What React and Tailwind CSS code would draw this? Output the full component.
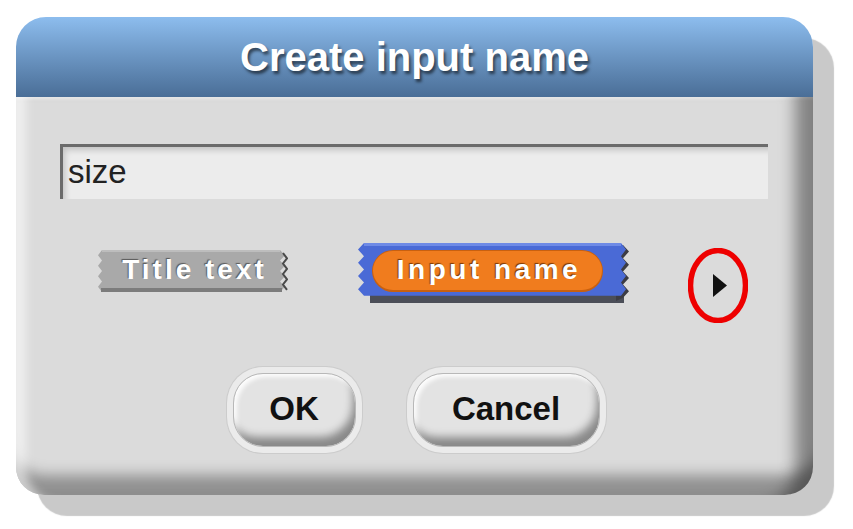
import React from 'react';

function zig(x0, x1, y0, y1, step) {
  // zigzag points from y0 to y1 alternating between x0 and x1
  const pts = [];
  let i = 0;
  for (let y = y0; y <= y1 + 0.01; y += step) {
    pts.push(`${i % 2 === 0 ? x0 : x1},${y.toFixed(1)}`);
    i++;
  }
  return pts;
}

function TitleBlock() {
  const right = zig(182, 187, 0, 42, 5.25);
  const left = zig(4, 0, 0, 42, 5.25).reverse();
  const shape = ['4,0', ...right, ...left].join(' ');
  return (
    <div className="relative w-[190px] h-[42px] flex items-center justify-center">
      <svg className="absolute inset-0" width="190" height="42" viewBox="0 0 190 42">
        <polygon points={shape} fill="#a9a9a9" />
        <rect x="3" y="38" width="181" height="4" fill="#7c7c7c" />
        <rect x="4" y="0" width="178" height="2" fill="#bdbdbd" />
        <polyline points={zig(185, 189, 3, 40, 5.25).join(' ')} fill="none" stroke="#4a4a4a" strokeWidth="2" />
      </svg>
      <span className="relative text-white font-bold text-[28px] tracking-[3px] leading-none pl-[3px] pb-[2px] [font-family:'Liberation_Sans',Arial,sans-serif] [text-shadow:-1px_-1px_1px_rgba(80,80,80,0.9)]">
        Title text
      </span>
    </div>
  );
}

function InputBlock() {
  const right = zig(263, 268, 0, 53, 6.6);
  const left = zig(6, 0, 0, 53, 6.6).reverse();
  const shape = ['6,0', ...right, ...left].join(' ');
  return (
    <div className="relative w-[272px] h-[60px] flex items-start">
      <svg className="absolute inset-0" width="272" height="60" viewBox="0 0 272 60">
        <rect x="12" y="50" width="254" height="10" fill="#4b4e58" />
        <polygon points={zig(265, 271, 2, 58, 6.6).join(' ') + ' 258,58 258,2'} fill="#3c3c44" />
        <polygon points={shape} fill="#4a6ad6" />
        <rect x="6" y="0" width="257" height="3" fill="#6e8ae6" />
        <rect x="14" y="7" width="231" height="42" rx="21" fill="#c9600f" />
        <rect x="15" y="8" width="229" height="39" rx="20" fill="#f07c1e" />
      </svg>
      <div className="relative ml-[14px] mt-[7px] w-[231px] h-[42px] flex items-center justify-center">
        <span className="text-white font-bold text-[28px] tracking-[3.5px] leading-none pl-[3px] pb-[2px] [font-family:'Liberation_Sans',Arial,sans-serif] [text-shadow:-1px_-1px_1px_rgba(110,50,0,0.9)]">
          Input name
        </span>
      </div>
    </div>
  );
}

function Button({ label, width }) {
  return (
    <div
      className="h-[74px] rounded-[30px] bg-[#e3e3e3] border border-[#b8b8b8] flex items-center justify-center shadow-[0_0_0_6px_rgba(255,255,255,0.6),0_0_0_7px_rgba(190,190,190,0.5),inset_-6px_-13px_8px_-4px_rgba(0,0,0,0.4),inset_3px_3px_4px_rgba(255,255,255,0.9)]"
      style={{ width }}
    >
      <span className="text-[#111] font-bold text-[33px] leading-none pb-[4px] [font-family:'Liberation_Sans',Arial,sans-serif]">
        {label}
      </span>
    </div>
  );
}

export default function App() {
  return (
    <div className="w-[853px] h-[529px] bg-white overflow-hidden pt-[17px] pl-[16px]">
      <div className="w-[797px] h-[478px] rounded-[30px] shadow-[21px_21px_1px_#c9c9c9] flex flex-col">
        <div className="h-[80px] rounded-t-[30px] bg-gradient-to-b from-[#8dbdee] to-[#4a6e97] flex items-center justify-center">
          <span className="text-white font-bold text-[40px] leading-none [font-family:'Liberation_Sans',Arial,sans-serif] [text-shadow:2px_3px_3px_rgba(0,0,0,0.55)]">
            Create input name
          </span>
        </div>
        <div className="flex-1 rounded-b-[28px] bg-[#dbdbdb] flex flex-col shadow-[inset_18px_0_10px_-8px_rgba(255,255,255,0.55),inset_-30px_0_16px_-12px_rgba(0,0,0,0.4),inset_0_-30px_14px_-10px_rgba(0,0,0,0.34),inset_0_4px_3px_-2px_rgba(255,255,255,0.5)]">
          <div className="mt-[47px] ml-[44px] w-[708px] h-[55px] bg-[#ececec] border-t-[3px] border-l-[3px] border-[#6b6b6b] shadow-[inset_4px_5px_6px_-2px_rgba(0,0,0,0.18)] flex items-center pl-[5px]">
            <span className="text-[#222] text-[33px] leading-none pb-[3px] [font-family:'Liberation_Sans',Arial,sans-serif]">size</span>
          </div>
          <div className="mt-[44px] flex items-start">
            <div className="ml-[82px] mt-[7px]">
              <TitleBlock />
            </div>
            <div className="ml-[70px]">
              <InputBlock />
            </div>
            <div className="ml-[58px] mt-[5px] w-[60px] h-[75px] relative">
              <svg width="60" height="75" viewBox="0 0 60 75">
                <ellipse cx="30" cy="37.5" rx="27.5" ry="35" fill="none" stroke="#ee0000" strokeWidth="5.5" />
                <polygon points="25,26 25,49 39,37.5" fill="#111" />
              </svg>
            </div>
          </div>
          <div className="mt-[50px] flex justify-center gap-[57px] pl-[3px]">
            <Button label="OK" width={123} />
            <Button label="Cancel" width={187} />
          </div>
        </div>
      </div>
    </div>
  );
}
